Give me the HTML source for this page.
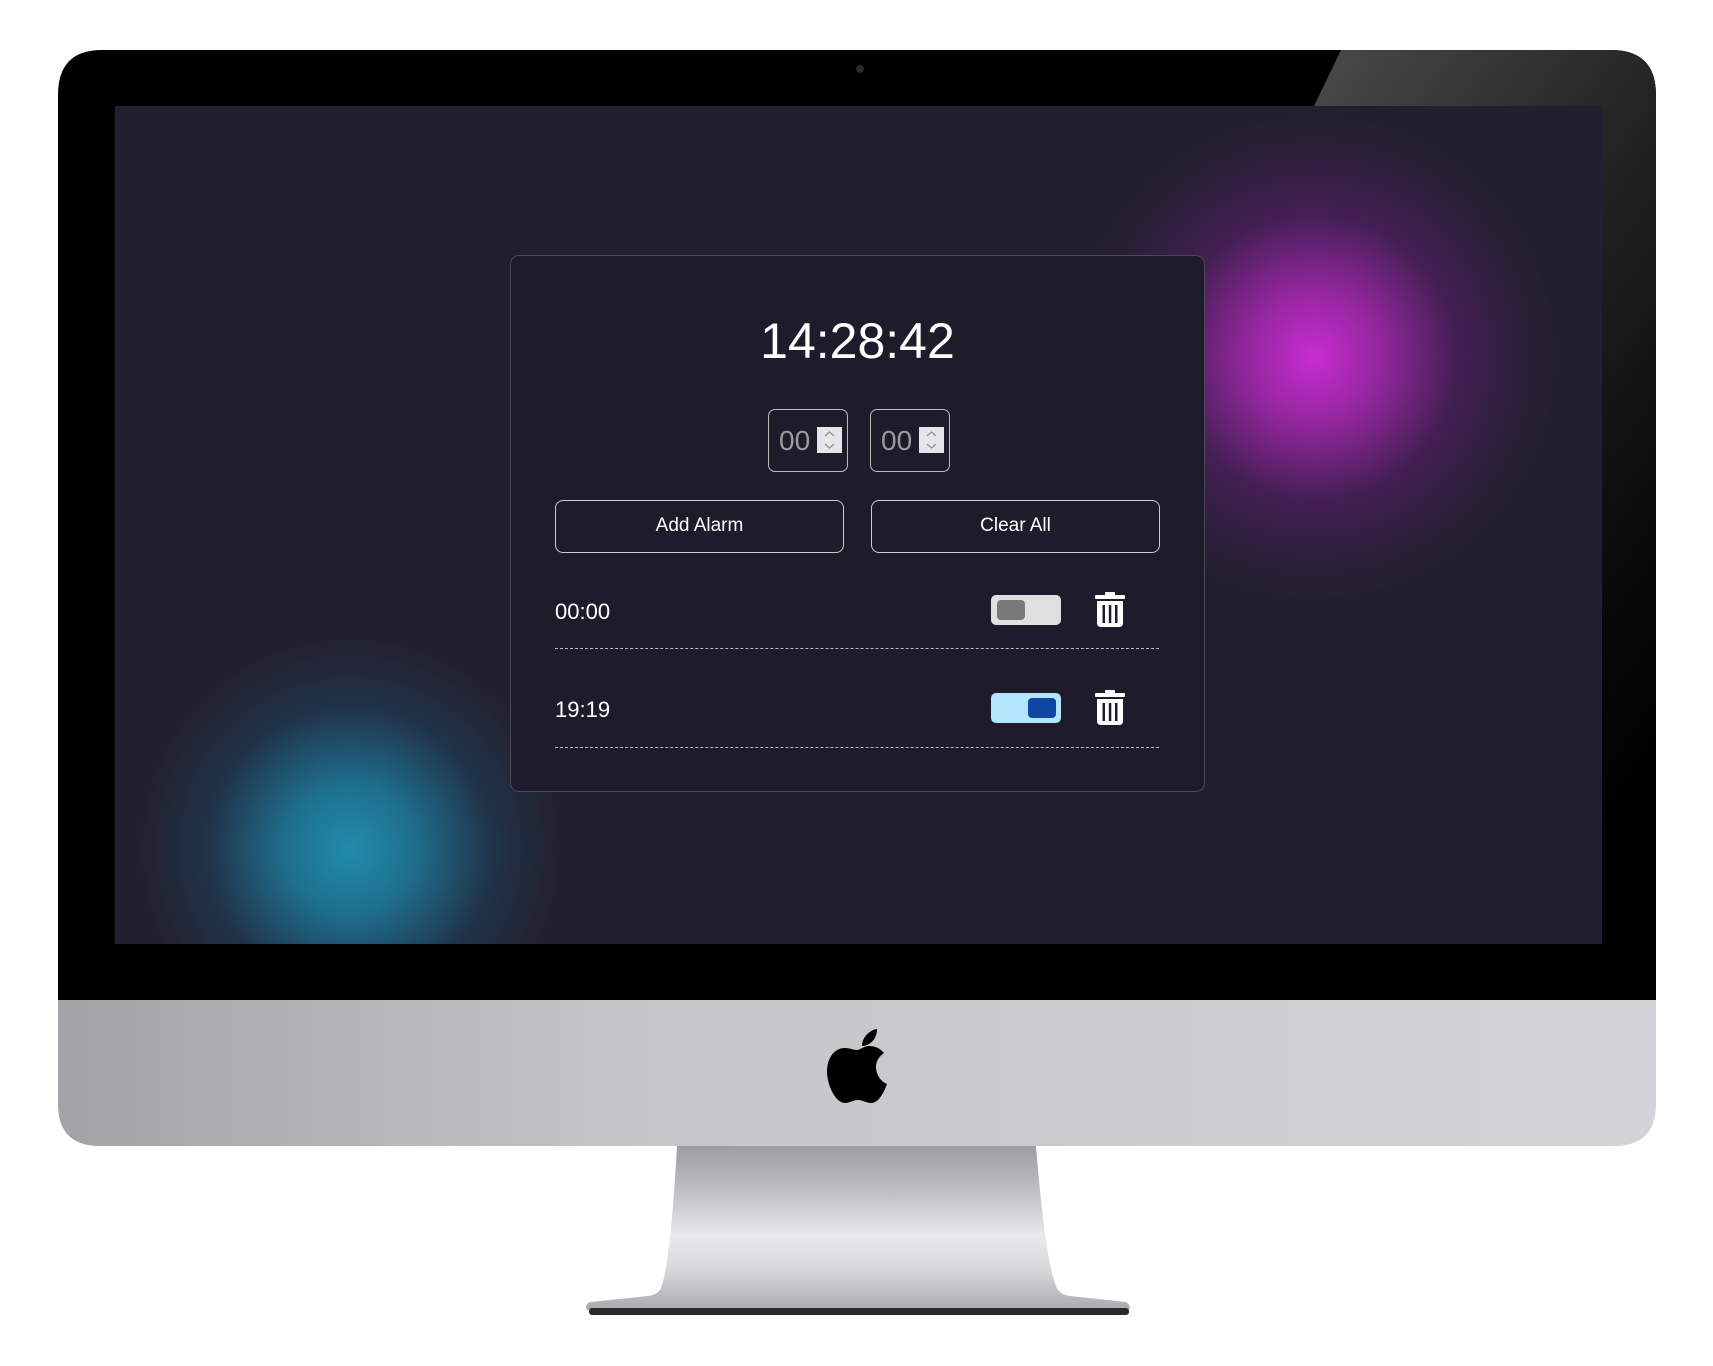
<!DOCTYPE html>
<html><head><meta charset="utf-8"><style>
html,body{margin:0;padding:0;background:#fff;width:1713px;height:1366px;overflow:hidden;font-family:"Liberation Sans",sans-serif}
.abs{position:absolute}
#screen{position:absolute;left:115px;top:106px;width:1487px;height:838px;background:#22202f;overflow:hidden}
.glowm{position:absolute;left:959px;top:11px;width:480px;height:480px;border-radius:50%;background:radial-gradient(circle,rgba(200,44,210,1) 0%,rgba(175,40,185,.8) 20%,rgba(110,30,130,.45) 42%,rgba(50,28,65,.25) 65%,rgba(34,32,47,0) 80%)}
.glowt{position:absolute;left:-15px;top:493px;width:500px;height:500px;border-radius:50%;background:radial-gradient(circle,rgba(32,140,170,1) 0%,rgba(30,125,160,.85) 18%,rgba(30,75,105,.45) 40%,rgba(34,32,47,.2) 60%,rgba(34,32,47,0) 75%)}
#card{position:absolute;left:395px;top:149px;width:695px;height:537px;border:1px solid #4a4957;border-radius:9px;background:#1e1c2a;box-sizing:border-box;color:#fff}
.time{position:absolute;left:0;width:100%;top:56px;text-align:center;font-size:50px}
.inp{position:absolute;top:153px;width:80px;height:63px;border:1px solid #bbb;border-radius:7px;box-sizing:border-box}
.inp span{position:absolute;left:10px;top:15px;font-size:28px;color:#9a99a3}
.inp i{position:absolute;left:48px;top:17px;width:25px;height:26px;background:#e6e6ea}
.inp svg{position:absolute;left:48px;top:17px}
.btn{position:absolute;top:244px;width:289px;height:53px;border:1.5px solid #ccc;border-radius:8px;box-sizing:border-box;text-align:center;line-height:50px;font-size:19px}
.row{position:absolute;left:44px;font-size:22px}
.dash{position:absolute;left:44px;width:604px;border-top:1.5px dashed #b8b8c0}
.tg{position:absolute;left:480px;width:70px;height:30px;border-radius:5px}
.kn{position:absolute;top:5px;width:28px;height:20px;border-radius:4px}
.tr{position:absolute;left:584px}
</style></head><body>
<svg class="abs" style="left:0;top:0" width="1713" height="1366">
<defs>
<linearGradient id="chin" x1="0" x2="1"><stop offset="0" stop-color="#a2a3a7"/><stop offset=".35" stop-color="#c4c5c9"/><stop offset="1" stop-color="#d3d4d8"/></linearGradient>
<linearGradient id="stand" x1="0" y1="0" x2="0" y2="1"><stop offset="0" stop-color="#9c9da1"/><stop offset=".35" stop-color="#c9cacd"/><stop offset=".55" stop-color="#e8e9eb"/><stop offset=".75" stop-color="#d8d9db"/><stop offset="1" stop-color="#a9aaae"/></linearGradient>
<linearGradient id="gloss" x1="0" y1="0" x2="0.5" y2="1"><stop offset="0" stop-color="#4a4a4a"/><stop offset=".4" stop-color="#262626"/><stop offset=".8" stop-color="#0a0a0a"/><stop offset="1" stop-color="#000"/></linearGradient>
</defs>
<path d="M677 1146 L1036 1146 Q1046 1270 1058 1290 Q1062 1295 1070 1296 L1126 1302 Q1131 1305 1129 1310 L587 1310 Q584 1305 590 1302 L648 1296 Q656 1295 660 1290 Q670 1270 677 1146Z" fill="url(#stand)"/>
<rect x="589" y="1308" width="540" height="7" rx="3" fill="#2a2a2c"/>
<path d="M58 1000 L1656 1000 L1656 1104 Q1656 1146 1614 1146 L100 1146 Q58 1146 58 1104Z" fill="url(#chin)"/>
<path d="M102 50 L1611 50 Q1656 50 1656 95 L1656 1000 L58 1000 L58 95 Q58 50 102 50Z" fill="#000"/>
<path d="M1341 50 L1611 50 Q1656 50 1656 95 L1656 1000 L1602 1000 L1602 106 L1314 106Z" fill="url(#gloss)"/>
<circle cx="860" cy="69" r="4" fill="#2a2a30"/>
<path d="M877 1029 C870 1030 862 1037 862 1046 C869 1046 877 1040 877 1029Z" fill="#000"/>
<path d="M845 1048 C833 1048 827 1060 827 1071 C827 1086 836 1103 845 1103 C850 1103 853 1100 858 1100 C863 1100 866 1103 871 1103 C879 1103 884 1092 887 1084 C880 1081 876 1074 876 1067 C876 1060 880 1056 884 1053 C879 1047 873 1046 869 1046 C864 1046 860 1050 857 1050 C853 1050 850 1048 845 1048Z" fill="#000"/>
</svg>
<div id="screen">
<div class="glowm"></div><div class="glowt"></div>
<div id="card">
<div class="time">14:28:42</div>
<div class="inp" style="left:257px"><span>00</span><i></i><svg width="25" height="26"><path d="M8 9 L12.5 5 L17 9 M8 17 L12.5 21 L17 17" stroke="#999" stroke-width="1.5" fill="none"/></svg></div>
<div class="inp" style="left:359px"><span>00</span><i></i><svg width="25" height="26"><path d="M8 9 L12.5 5 L17 9 M8 17 L12.5 21 L17 17" stroke="#999" stroke-width="1.5" fill="none"/></svg></div>
<div class="btn" style="left:44px">Add Alarm</div>
<div class="btn" style="left:360px">Clear All</div>
<div class="row" style="top:343px">00:00</div>
<div class="tg" style="top:339px;background:#e0e0e0"><div class="kn" style="left:6px;background:#7a7a7a"></div></div>
<svg class="tr" style="top:336px" width="30" height="35" viewBox="0 0 30 35"><rect x="0" y="3" width="30" height="4" rx="1" fill="#fff"/><rect x="10" y="0" width="10" height="4" rx="1" fill="#fff"/><path d="M2 9 H28 V31 Q28 35 24 35 H6 Q2 35 2 31Z" fill="#fff"/><rect x="7.5" y="13" width="2.5" height="18" fill="#1e1c2a"/><rect x="13.8" y="13" width="2.5" height="18" fill="#1e1c2a"/><rect x="20" y="13" width="2.5" height="18" fill="#1e1c2a"/></svg>
<div class="dash" style="top:392px"></div>
<div class="row" style="top:441px">19:19</div>
<div class="tg" style="top:437px;background:#b3e5fc"><div class="kn" style="left:37px;background:#0d47a1"></div></div>
<svg class="tr" style="top:434px" width="30" height="35" viewBox="0 0 30 35"><rect x="0" y="3" width="30" height="4" rx="1" fill="#fff"/><rect x="10" y="0" width="10" height="4" rx="1" fill="#fff"/><path d="M2 9 H28 V31 Q28 35 24 35 H6 Q2 35 2 31Z" fill="#fff"/><rect x="7.5" y="13" width="2.5" height="18" fill="#1e1c2a"/><rect x="13.8" y="13" width="2.5" height="18" fill="#1e1c2a"/><rect x="20" y="13" width="2.5" height="18" fill="#1e1c2a"/></svg>
<div class="dash" style="top:491px"></div>
</div>
</div>
</body></html>
